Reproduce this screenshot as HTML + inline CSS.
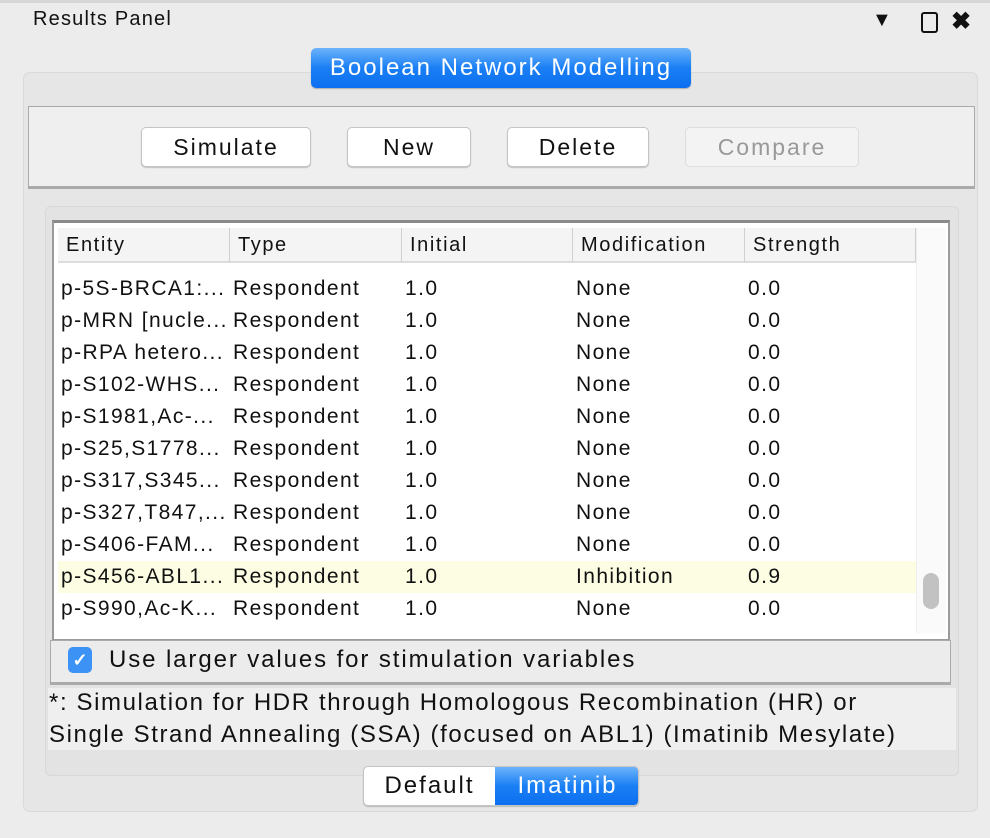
<!DOCTYPE html>
<html><head><meta charset="utf-8"><style>
*{box-sizing:border-box;margin:0;padding:0}
body{width:990px;height:838px;background:#ececec;font-family:"Liberation Sans",sans-serif;font-size:21px;letter-spacing:1.4px;color:#111;position:relative;overflow:hidden}
.a{position:absolute}
.btn{position:absolute;top:127px;height:40px;background:#fff;border:1px solid #c4c4c4;border-radius:5px;box-shadow:0 1px 1px rgba(0,0,0,.2);text-align:center;line-height:38px;font-size:23px;letter-spacing:2px}
.row{position:absolute;left:0;width:862px;height:32px;line-height:32px;white-space:nowrap}
.row span{position:absolute;top:0}
.hd span{position:absolute;top:0;height:34px;line-height:34px;border-right:1px solid #d0d0d0;padding-left:8px}
</style></head><body>
<div class="a" style="left:0;top:0;width:990px;height:3px;background:#d6d6d6"></div>
<div class="a" style="left:33px;top:8px;font-size:20px;letter-spacing:1.2px">Results Panel</div>
<div class="a" style="left:872px;top:9px;font-size:20px;letter-spacing:0">▼</div>
<div class="a" style="left:921px;top:12px;width:17px;height:21px;border:2px solid #111;border-radius:3px"></div>
<div class="a" style="left:951px;top:7px;font-size:24px;font-weight:bold;letter-spacing:0">✖</div>

<div class="a" style="left:23px;top:72px;width:955px;height:740px;background:#e6e6e6;border:1px solid #dadada;border-radius:7px"></div>
<div class="a" style="left:311px;top:48px;width:380px;height:40px;border-radius:5px;background:linear-gradient(#6cb3fa,#1a7ff5 50%,#0c6ff0);color:#fff;text-align:center;line-height:40px;font-size:24px;letter-spacing:2px;box-shadow:0 1px 1px rgba(0,0,0,.25)">Boolean Network Modelling</div>

<div class="a" style="left:28px;top:106px;width:947px;height:83px;background:#efefef;border:1px solid #aaa;border-bottom:3px solid #aaa"></div>
<div class="btn" style="left:141px;width:170px">Simulate</div>
<div class="btn" style="left:347px;width:124px">New</div>
<div class="btn" style="left:507px;width:142px">Delete</div>
<div class="btn" style="left:685px;width:174px;background:#f3f3f3;color:#999;border-color:#ddd;box-shadow:none">Compare</div>

<div class="a" style="left:45px;top:206px;width:914px;height:570px;background:#e3e3e3;border:1px solid #d8d8d8;border-radius:6px"></div>
<div class="a" style="left:52px;top:220px;width:898px;height:421px;background:#fff;border:2px solid #9a9a9a;border-top:3px solid #8a8a8a"></div>
<div class="a" style="left:916px;top:228px;width:30px;height:405px;background:#fafafa;border-left:1px solid #eee"></div>
<div class="a" style="left:923px;top:573px;width:16px;height:36px;background:#c2c2c2;border-radius:8px"></div>
<div class="a hd" style="left:58px;top:228px;width:858px;height:35px;background:#f4f4f4;border-bottom:2px solid #ddd;font-size:20px;letter-spacing:1.6px">
<span style="left:0;width:172px">Entity</span><span style="left:172px;width:172px">Type</span><span style="left:344px;width:171px">Initial</span><span style="left:515px;width:172px">Modification</span><span style="left:687px;width:171px">Strength</span>
</div>
<div class="a" style="left:58px;top:264px;width:858px;height:369px;overflow:hidden">
<div class="a" style="left:0;top:297px;width:858px;height:32px;background:#fdfde4"></div>
<div class="row" style="top:9px"><span style="left:3px">p-5S-BRCA1:...</span><span style="left:175px">Respondent</span><span style="left:347px">1.0</span><span style="left:518px">None</span><span style="left:690px">0.0</span></div>
<div class="row" style="top:41px"><span style="left:3px">p-MRN [nucle...</span><span style="left:175px">Respondent</span><span style="left:347px">1.0</span><span style="left:518px">None</span><span style="left:690px">0.0</span></div>
<div class="row" style="top:73px"><span style="left:3px">p-RPA hetero...</span><span style="left:175px">Respondent</span><span style="left:347px">1.0</span><span style="left:518px">None</span><span style="left:690px">0.0</span></div>
<div class="row" style="top:105px"><span style="left:3px">p-S102-WHS...</span><span style="left:175px">Respondent</span><span style="left:347px">1.0</span><span style="left:518px">None</span><span style="left:690px">0.0</span></div>
<div class="row" style="top:137px"><span style="left:3px">p-S1981,Ac-...</span><span style="left:175px">Respondent</span><span style="left:347px">1.0</span><span style="left:518px">None</span><span style="left:690px">0.0</span></div>
<div class="row" style="top:169px"><span style="left:3px">p-S25,S1778...</span><span style="left:175px">Respondent</span><span style="left:347px">1.0</span><span style="left:518px">None</span><span style="left:690px">0.0</span></div>
<div class="row" style="top:201px"><span style="left:3px">p-S317,S345...</span><span style="left:175px">Respondent</span><span style="left:347px">1.0</span><span style="left:518px">None</span><span style="left:690px">0.0</span></div>
<div class="row" style="top:233px"><span style="left:3px">p-S327,T847,...</span><span style="left:175px">Respondent</span><span style="left:347px">1.0</span><span style="left:518px">None</span><span style="left:690px">0.0</span></div>
<div class="row" style="top:265px"><span style="left:3px">p-S406-FAM...</span><span style="left:175px">Respondent</span><span style="left:347px">1.0</span><span style="left:518px">None</span><span style="left:690px">0.0</span></div>
<div class="row" style="top:297px"><span style="left:3px">p-S456-ABL1...</span><span style="left:175px">Respondent</span><span style="left:347px">1.0</span><span style="left:518px">Inhibition</span><span style="left:690px">0.9</span></div>
<div class="row" style="top:329px"><span style="left:3px">p-S990,Ac-K...</span><span style="left:175px">Respondent</span><span style="left:347px">1.0</span><span style="left:518px">None</span><span style="left:690px">0.0</span></div>
</div>
<div class="a" style="left:50px;top:640px;width:901px;height:45px;background:#ececec;border:1px solid #aaa;border-bottom:3px solid #aaa"></div>
<div class="a" style="left:68px;top:647px;width:24px;height:26px;border-radius:5px;background:#3c92f5;color:#fff;text-align:center;line-height:26px;font-size:18px;font-weight:bold;letter-spacing:0">✓</div>
<div class="a" style="left:109px;top:646px;line-height:28px;font-size:24px;letter-spacing:1.9px;white-space:nowrap">Use larger values for stimulation variables</div>
<div class="a" style="left:48px;top:688px;width:908px;height:62px;background:#efefef"></div>
<div class="a" style="left:49px;top:687px;line-height:32px;font-size:24px;letter-spacing:1.6px;white-space:nowrap">*: Simulation for HDR through Homologous Recombination (HR) or<br>Single Strand Annealing (SSA) (focused on ABL1) (Imatinib Mesylate)</div>

<div class="a" style="left:363px;top:766px;width:276px;height:40px;border-radius:5px;border:1px solid #c4c4c4;background:#fff;box-shadow:0 1px 1px rgba(0,0,0,.2);overflow:hidden;font-size:24px;letter-spacing:2px">
<div class="a" style="left:0;top:0;width:131px;height:38px;text-align:center;line-height:38px">Default</div>
<div class="a" style="left:131px;top:0;width:145px;height:38px;text-align:center;line-height:38px;color:#fff;background:linear-gradient(#6cb3fa,#1a7ff5 50%,#0c6ff0)">Imatinib</div>
</div>
</body></html>
